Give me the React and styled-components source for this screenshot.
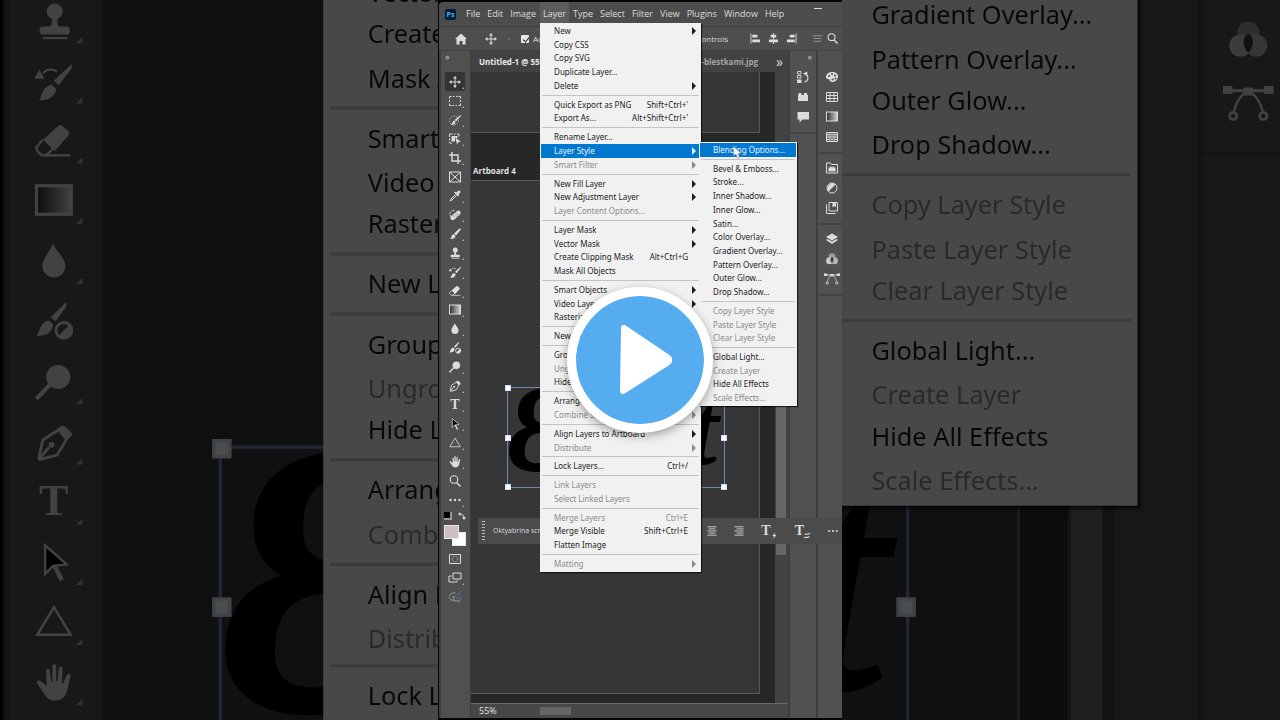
import React, { useId } from 'react';
import styled, { createGlobalStyle, css } from 'styled-components';

const GlobalStyle = createGlobalStyle`
    * {
        box-sizing: border-box;
    }
    body {
        margin: 0;
        background: #000;
        overflow: hidden;
    }
    button,
    select,
    input {
        margin: 0;
        padding: 0;
        border: 0;
        background: none;
        color: inherit;
        font: inherit;
    }
    ul {
        margin: 0;
        padding: 0;
        list-style: none;
    }
`;

/* ---------- data ---------- */

const LAYER_STYLE_MENU = [
    [{ label: 'Blending Options...', active: true, cursor: true }],
    [
        { label: 'Bevel & Emboss...' },
        { label: 'Stroke...' },
        { label: 'Inner Shadow...' },
        { label: 'Inner Glow...' },
        { label: 'Satin...' },
        { label: 'Color Overlay...' },
        { label: 'Gradient Overlay...' },
        { label: 'Pattern Overlay...' },
        { label: 'Outer Glow...' },
        { label: 'Drop Shadow...' }
    ],
    [
        { label: 'Copy Layer Style', disabled: true },
        { label: 'Paste Layer Style', disabled: true },
        { label: 'Clear Layer Style', disabled: true }
    ],
    [
        { label: 'Global Light...' },
        { label: 'Create Layer', disabled: true },
        { label: 'Hide All Effects' },
        { label: 'Scale Effects...', disabled: true }
    ]
];

const LAYER_MENU = [
    [
        { label: 'New', more: true },
        { label: 'Copy CSS' },
        { label: 'Copy SVG' },
        { label: 'Duplicate Layer...' },
        { label: 'Delete', more: true }
    ],
    [
        { label: 'Quick Export as PNG', keys: "Shift+Ctrl+'" },
        { label: 'Export As...', keys: "Alt+Shift+Ctrl+'" }
    ],
    [
        { label: 'Rename Layer...' },
        { label: 'Layer Style', more: true, active: true, submenu: LAYER_STYLE_MENU },
        { label: 'Smart Filter', more: true, disabled: true }
    ],
    [
        { label: 'New Fill Layer', more: true },
        { label: 'New Adjustment Layer', more: true },
        { label: 'Layer Content Options...', disabled: true }
    ],
    [
        { label: 'Layer Mask', more: true },
        { label: 'Vector Mask', more: true },
        { label: 'Create Clipping Mask', keys: 'Alt+Ctrl+G' },
        { label: 'Mask All Objects' }
    ],
    [
        { label: 'Smart Objects', more: true },
        { label: 'Video Layers', more: true },
        { label: 'Rasterize', more: true }
    ],
    [{ label: 'New Layer Based Slice' }],
    [
        { label: 'Group Layers' },
        { label: 'Ungroup Layers', disabled: true },
        { label: 'Hide Layers' }
    ],
    [
        { label: 'Arrange', more: true },
        { label: 'Combine Shapes', more: true, disabled: true }
    ],
    [
        { label: 'Align Layers to Artboard', more: true },
        { label: 'Distribute', more: true, disabled: true }
    ],
    [{ label: 'Lock Layers...', keys: 'Ctrl+/' }],
    [
        { label: 'Link Layers', disabled: true },
        { label: 'Select Linked Layers', disabled: true }
    ],
    [
        { label: 'Merge Layers', keys: 'Ctrl+E', disabled: true },
        { label: 'Merge Visible', keys: 'Shift+Ctrl+E' },
        { label: 'Flatten Image' }
    ],
    [{ label: 'Matting', more: true, disabled: true }]
];

const MENUS = [
    'File',
    'Edit',
    'Image',
    'Layer',
    'Type',
    'Select',
    'Filter',
    'View',
    'Plugins',
    'Window',
    'Help'
];

/* ---------- icons ---------- */

const Svg = styled.svg`
    display: block;
    flex: none;
    overflow: visible;
    fill: none;
    stroke: currentColor;
    stroke-width: 2;
`;

const solid = { fill: 'currentColor', stroke: 'none' };

function GradientIcon() {
    const id = useId();
    return (
        <>
            <defs>
                <linearGradient id={id} x1="0" x2="1" y1="0" y2="0">
                    <stop offset="0" stopColor="#2b2b2b" />
                    <stop offset="1" stopColor="#d8d8d8" />
                </linearGradient>
            </defs>
            <rect x="1" y="2" width="22" height="18" fill={`url(#${id})`} />
        </>
    );
}

const ICONS = {
    move: (
        <>
            <path d="M12 3v18M3 12h18" />
            <path
                {...solid}
                d="M12 0l4 5H8zM12 24l4-5H8zM0 12l5-4v8zM24 12l-5-4v8z"
            />
        </>
    ),
    marquee: (
        <path d="M1 7V3h4M8 3h3M14 3h3M19 3h4v4M23 10v4M23 17v4h-4M16 21h-3M10 21H7M5 21H1v-4M1 14v-4" />
    ),
    quickSelect: (
        <>
            <circle cx="10" cy="13" r="9" strokeDasharray="2 3" />
            <path {...solid} d="M24 1l-1 4-9 10-3-3zM10 13l3 3c0 4-4 6-9 6 3-2 2-7 6-9z" />
        </>
    ),
    objectSelect: (
        <>
            <path d="M1 8V2h6M10 2h3M16 2h4v5M1 11v4M1 18v2h5" strokeWidth="2" />
            <path {...solid} d="M5 6h12v5l-5-2v8H5z" />
            <path {...solid} d="M13 10l11 7-5 1-3 5z" />
        </>
    ),
    crop: <path strokeWidth="3" d="M6 0v18h18M0 6h18v18" />,
    frame: <path d="M1 2h22v20H1zM1 2l22 20M23 2L1 22" />,
    eyedropper: (
        <>
            <path {...solid} d="M15 5l3-3c2-3 7 1 4 4l-3 3 1 2-2 2-8-8 2-2z" />
            <path d="M13 9L4 18l-2 4 4-2 9-9" />
        </>
    ),
    healing: (
        <>
            <path d="M3 15C-1 8 4 2 11 3" strokeDasharray="3 2" />
            <path {...solid} d="M15 5c4-5 11 1 7 6L11 21c-5 4-11-2-7-7z" />
            <path stroke="#4f4f4f" strokeWidth="1.5" d="M10 9l7 7M13 7l7 6M7 12l6 6" strokeDasharray="2 2" />
        </>
    ),
    brush: (
        <path {...solid} d="M23 1c1 1 1 2 0 3l-9 11-4-4L21 1zM9 12l4 4c0 4-5 7-11 6 4-2 2-8 7-10z" />
    ),
    stamp: (
        <>
            <circle {...solid} cx="12.5" cy="6" r="5" />
            <path {...solid} d="M10.5 9h4c-.5 3-.5 5 1 7h-6c1.500-2 1.500-4 1-7z" />
            <rect {...solid} x="3" y="15.500" width="19" height="5" rx="2" />
            <path strokeWidth="1.300" d="M5 22.800h15.500" />
        </>
    ),
    historyBrush: (
        <>
            <path {...solid} d="M-.5 10.500L2.800 4.800 6 10.500z" />
            <path strokeWidth="1.300" d="M5 7c3-3 6-3 9-1" />
            <path {...solid} d="M23 1.500c1 1 0 3-1 4l-7 9-3-3zM10.500 14l3 3c-1 5-5 7-11 7 2-1 1-8 8-10z" />
        </>
    ),
    eraser: (
        <>
            <path {...solid} d="M14.500 2.500c1-1 2-1 3 0l3.500 3c1 1 1 2 0 3l-8.500 9.500-7.500-7z" />
            <path strokeWidth="1.500" d="M5 11l-3.500 4c-1 1-.5 2 0 3l2 2c1 1 3 1 4.500 0l4-4" />
            <path strokeWidth="1.500" d="M6 20.800h16.500" />
        </>
    ),
    gradient: <GradientIcon />,
    drop: <path {...solid} d="M11.300.5C13 5 19.300 10 19.300 14.500a7.300 7.300 0 0 1-14.600 0C4.700 10 10 5 11.300.5z" />,
    mixer: (
        <>
            <path {...solid} d="M19.500-.5c1 1 0 3-.5 4l-6 8-3-2.500zM8.500 11l3 2.500c-1 6-4 7-10.500 7.500 2-2 2-9 7.500-10z" />
            <circle cx="18.300" cy="17.300" r="5" strokeWidth="1.800" />
            <path {...solid} d="M22 13.500A5.300 5.300 0 0 1 14.500 21z" />
        </>
    ),
    dodge: (
        <>
            <circle {...solid} cx="14.700" cy="8.700" r="7.600" />
            <path strokeWidth="2.600" d="M10 13l-9 9.500" />
        </>
    ),
    pen: (
        <>
            <path {...solid} d="M16 2c2-1 3 0 4 1l3 3c1 1 0 2-1 3l-2 2-6-7z" />
            <path strokeWidth="1.800" d="M15 4L5 10.500 2.500 21.500c-.3 1 .2 1.500 1 1.200L14 20l6-10zM3 22l6-7" />
            <circle {...solid} cx="10.500" cy="13.500" r="1.800" />
        </>
    ),
    select: (
        <>
            <path fill="#000" strokeWidth="1.500" d="M6.500 1v18l5-5 8.500-1z" />
            <path strokeWidth="2.800" d="M12.500 14l4.500 9" />
        </>
    ),
    triangle: <path strokeWidth="1.600" d="M12 2l10.500 17.500h-21z" />,
    hand: (
        <path
            {...solid}
            d="M7 4.500c0-2 2.500-2 2.500 0l.7 6.500h.8V1.500C11-.5 13.500-.5 13.500 1.500V11h.8l.7-8c.2-2 2.700-2 2.500 0l-.5 9h.8l2.200-5c.8-1.500 2.800-.8 2.500.6L20.500 16c-.5 4-3.500 7-7.500 7-4 0-6-2-7.500-5L1.500 12.500c-1-2 1-3 2.500-1.500L7.500 14z"
        />
    ),
    zoom: (
        <>
            <circle cx="10" cy="9" r="7.500" strokeWidth="2.300" />
            <path strokeWidth="3" d="M15 15l8 8" />
        </>
    ),
    dots: (
        <>
            <circle {...solid} cx="3" cy="12" r="2.500" />
            <circle {...solid} cx="12" cy="12" r="2.500" />
            <circle {...solid} cx="21" cy="12" r="2.500" />
        </>
    ),
    quickMask: (
        <>
            <path d="M1 3h22v18H1z" />
            <circle cx="12" cy="12" r="5.500" strokeWidth="1.500" strokeDasharray="2 1.500" />
        </>
    ),
    screenMode: (
        <>
            <path d="M8 2h16v12H8z" />
            <path d="M5 8H0v12h16v-3" />
        </>
    ),
    cloud: (
        <>
            <path d="M13 4C6 2 0 7 1 13c1 4 4 6 8 6M12 11h-4l3 9h12" />
            <path stroke="#4e78a0" d="M14 9l8-8M19 10l3-3M14 14l9 0v5" />
        </>
    ),
    home: <path {...solid} d="M12 1l12 11h-3v11h-6v-7H9v7H3V12H0z" />,
    chevron: <path strokeWidth="3" d="M3 8l9 8 9-8" />,
    alignLeft: (
        <>
            <path d="M2 1v22" />
            <path {...solid} d="M5 4h11v6H5zM5 14h17v6H5z" />
        </>
    ),
    alignCenter: (
        <>
            <path d="M12 0v24" />
            <path {...solid} d="M6 4h12v6H6zM2 14h20v6H2z" />
        </>
    ),
    alignRight: (
        <>
            <path d="M22 1v22" />
            <path {...solid} d="M8 4h11v6H8zM2 14h17v6H2z" />
        </>
    ),
    lines: <path d="M1 6h22M4 12h16M4 18h16" />,
    textCenter: <path d="M1 2h22M4 7h16M1 12h22M4 17h16M1 22h22" />,
    textRight: <path d="M1 2h22M6 7h17M1 12h22M6 17h17M1 22h22" />,
    history: (
        <>
            <path d="M1 1h7v5H1zM1 9h7v5H1z" strokeWidth="1.800" />
            <path {...solid} d="M0 17h9v7H0z" />
            <path strokeWidth="2.500" d="M15 22c8-2 9-10 3-16" />
            <path {...solid} d="M12 5l9-4-1 9z" />
        </>
    ),
    plugin: <path {...solid} d="M3 8V4h6v4h5V4h6v4h2v12H2V8z" />,
    comment: <path {...solid} d="M1 2h23v15H11l-6 6v-6H1z" />,
    palette: (
        <>
            <path {...solid} d="M12 2c8 0 13 4 12 10-1 6-6 10-12 10s-4-6-7-6-5-1-5-4c0-5 5-10 12-10z" />
            <g fill="#4c4c4c" stroke="none">
                <circle cx="6" cy="10" r="2" />
                <circle cx="12" cy="6" r="2" />
                <circle cx="18" cy="9" r="2" />
                <circle cx="19" cy="15" r="2" />
                <circle cx="13" cy="17" r="2" />
            </g>
        </>
    ),
    swatches: <path d="M1 3h22v18H1zM1 9h22M1 15h22M8 3v18M16 3v18" />,
    patterns: (
        <>
            <path d="M1 3h22v18H1zM1 12h22M8 3v18M16 3v18" />
            <path strokeWidth="1.500" d="M4 5v5M2 7h5M12 5v5M10 7h4M20 5v5M17 7h5M4 14v5M2 17h5M12 14v5M10 17h4M20 14v5M17 17h5" />
        </>
    ),
    library: (
        <>
            <path d="M1 22V2h8l2 3h12v17z" />
            <path {...solid} d="M5 19v-8h3V9h3v2h2V9h3v2h3v8z" />
        </>
    ),
    adjust: (
        <>
            <circle cx="12" cy="12" r="10" />
            <path {...solid} d="M19 5A10 10 0 0 0 5 19z" />
        </>
    ),
    styles: (
        <>
            <path d="M6 1h17v17H6zM1 5v18h18" />
            <path {...solid} d="M13 2h7v9l-3-3-4 3z" />
        </>
    ),
    layers: (
        <>
            <path {...solid} d="M12 1l12 7-12 7L0 8z" />
            <path {...solid} d="M0 14l3-2 9 5 9-5 3 2-12 8z" />
        </>
    ),
    channels: (
        <g stroke="none">
            <circle cx="12" cy="7.500" r="7" fill="#9a9a9a" />
            <circle cx="7" cy="15.500" r="7" fill="#c8c8c8" />
            <circle cx="17" cy="15.500" r="7" fill="#b4b4b4" />
            <path fill="#3a3a3a" d="M12 8c4 2 4 8 0 12-4-4-4-10 0-12z" />
        </g>
    ),
    paths: (
        <>
            <path d="M1 4h22" />
            <path {...solid} d="M-4 1h6v5h-6zM22 1h6v5h-6zM9 2h6v5H9z" />
            <path strokeWidth="1.500" d="M9 6C6 9 4 12 3 17M15 6c3 3 5 6 6 11" />
            <circle cx="2.500" cy="20" r="2.300" strokeWidth="1.700" />
            <circle cx="21.500" cy="20" r="2.300" strokeWidth="1.700" />
        </>
    ),
    bolt: <path {...solid} d="M15 1L4 14h6l-3 9 12-13h-7z" />,
    wave: <path strokeWidth="4" d="M3 9c4-5 8 3 18-5M1 20c4-5 8 3 18-5" />,
    swap: (
        <>
            <path d="M4 6c9-1 14 4 14 12" strokeWidth="3" />
            <path {...solid} d="M7 0v12L0 6zM12 16h12l-6 8z" />
        </>
    )
};

function Icon({ name, size = 12 }) {
    return (
        <Svg width={size} height={size} viewBox="0 0 24 24" aria-hidden="true">
            {ICONS[name]}
        </Svg>
    );
}

/* ---------- window ---------- */

const Window = styled.div`
    display: flex;
    flex-direction: column;
    width: 100%;
    height: 100%;
    padding: 2px 0 2px 1px;
    background: #050505;
    color: #dcdcdc;
    font: 9px/12px 'Open Sans', 'Noto Sans', sans-serif;
`;

const MenuBar = styled.nav`
    position: relative;
    z-index: 3;
    display: flex;
    align-items: center;
    padding: 0 20px 0 6px;
    background: #4c4c4c;
    border-bottom: 1px solid #3c3c3c;
    border-radius: 4px 0 0 0;
`;

const Logo = styled.span`
    width: 11px;
    margin-right: 7px;
    border-radius: 2px;
    background: #001e36;
    color: #4db1ff;
    font-size: 7px;
    font-weight: 700;
    line-height: 11px;
    text-align: center;
`;

const MenuList = styled.ul`
    display: flex;
    flex: 1;
    gap: 1px;
`;

const MenuName = styled.button`
    padding: 4px 3px;
    line-height: 16px;
    white-space: nowrap;
`;

const MenuTitle = styled.li`
    position: relative;
    background: ${props => (props.$open ? '#5c5c5c' : 'transparent')};
`;

const Minimize = styled.button`
    width: 8px;
    height: 12px;
    border-top: 1px solid #d8d8d8;
`;

const Popup = styled.ul`
    position: absolute;
    display: flex;
    flex-direction: column;
    padding: 1px;
    background: #f1f1f1;
    box-shadow: 1px 1px 1px rgba(0, 0, 0, 0.7);
    color: #1c1c1c;
    font: 8px/12px 'Noto Sans', 'Open Sans', sans-serif;
`;

const LayerPopup = styled(Popup)`
    top: 21px;
    left: 0;
    width: 161px;
    min-height: 549px;
`;

const StylePopup = styled(Popup)`
    top: -2px;
    left: 158px;
    width: 98px;
    min-height: 264px;
`;

const Row = styled.li`
    position: relative;
    display: flex;
    flex: 1 0 13px;
`;

const RowButton = styled.button`
    display: flex;
    flex: 1;
    align-items: center;
    padding: 0 3px 0 13px;
    text-align: left;
    white-space: nowrap;

    ${props =>
        props.$active &&
        css`
            background: #0078d0;
            color: #e8f4ff;
        `}

    &:disabled {
        color: #8a8a8a;
    }
`;

const RowLabel = styled.span`
    flex: 1;
`;

const Keys = styled.span`
    padding-right: 1px;
`;

const Arrow = styled.span`
    width: 8px;

    &::after {
        content: ${props => (props.$show ? "''" : 'none')};
        display: block;
        width: 0;
        margin-left: 3px;
        border: 4px solid transparent;
        border-left-color: currentColor;
        border-right: 0;
    }
`;

const Divider = styled.li`
    height: 1px;
    margin: 2px 1px;
    background: #c4c4c4;
`;

const Pointer = styled.svg`
    position: absolute;
    top: 3px;
    left: 33px;
    z-index: 1;
    overflow: visible;
`;

function MenuRows({ groups }) {
    return groups.map((group, index) => {
        return (
            <React.Fragment key={index}>
                {index > 0 && <Divider role="separator" />}
                {group.map(({ label, keys, more, active, disabled, submenu, cursor }) => {
                    return (
                        <Row key={label}>
                            <RowButton type="button" $active={active} disabled={disabled}>
                                <RowLabel>{label}</RowLabel>
                                {keys && <Keys>{keys}</Keys>}
                                <Arrow $show={more} />
                            </RowButton>
                            {cursor && (
                                <Pointer width="9" height="13" viewBox="0 0 16 24">
                                    <path
                                        d="M1 1v18l4-4 4 8 3-2-3-7h6z"
                                        fill="#fff"
                                        stroke="#777"
                                        strokeWidth="1"
                                    />
                                </Pointer>
                            )}
                            {submenu && (
                                <StylePopup>
                                    <MenuRows groups={submenu} />
                                </StylePopup>
                            )}
                        </Row>
                    );
                })}
            </React.Fragment>
        );
    });
}

/* ---------- options bar ---------- */

const OptionsBar = styled.div`
    display: flex;
    align-items: center;
    height: 24px;
    padding: 0 4px 0 16px;
    background: #4e4e4e;
    border-bottom: 1px solid #404040;
    font-size: 8px;
    white-space: nowrap;
`;

const IconButton = styled.button`
    display: flex;
    align-items: center;
    justify-content: center;
    color: ${props => (props.$dim ? '#9a9a9a' : '#dcdcdc')};
`;

const OptionTools = styled.div`
    display: flex;
    flex: 1;
    align-items: center;
    gap: 10px;

    ${IconButton}:first-child {
        margin-right: 8px;
    }
`;

const AlignTools = styled.div`
    display: flex;
    align-items: center;
    gap: 7px;
    margin-right: 15px;
    margin-left: 22px;
`;

const SearchTools = styled.div`
    display: flex;
    gap: 4px;
`;

const CheckLabel = styled.label`
    display: flex;
    align-items: center;
    gap: 4px;
`;

const Check = styled.input`
    appearance: none;
    width: 8px;
    height: 8px;
    border-radius: 1px;
    background: ${props => (props.defaultChecked ? '#e8e8e8' : '#5a5a5a')};

    &:checked::after {
        content: '';
        display: block;
        width: 3px;
        height: 5px;
        margin: 1px 0 0 3px;
        border: solid #222;
        border-width: 0 1px 1px 0;
        transform: rotate(40deg);
    }
`;

/* ---------- tools ---------- */

const Body = styled.div`
    position: relative;
    display: flex;
    flex: 1;
    min-height: 0;
    background: #3e3e3e;
`;

const Toolbox = styled.div`
    display: flex;
    flex-direction: column;
    width: 29px;
    margin: 0 1px 0 2px;
    background: #505050;
`;

const Collapse = styled.button`
    height: 10px;
    padding: 0 4px;
    color: #c8c8c8;
    font-size: 9px;
    line-height: 7px;
    text-align: ${props => (props.$right ? 'right' : 'left')};
`;

const ToolList = styled.div`
    display: flex;
    flex-direction: column;
    padding: 11px 5px 0 4px;
`;

const ToolButton = styled(IconButton)`
    position: relative;
    height: 19px;
    border-radius: 2px;
    background: ${props => (props.$active ? '#343434' : 'transparent')};

    &::after {
        content: ${props => (props.$plain ? 'none' : "''")};
        position: absolute;
        right: 1px;
        bottom: 2px;
        border-bottom: 2px solid #a8a8a8;
        border-left: 2px solid transparent;
    }
`;

const TypeGlyph = styled.span`
    font: 700 14px/16px 'Liberation Serif', serif;
`;

const ColorKeys = styled.div`
    display: flex;
    align-items: center;
    justify-content: space-between;
    height: 14px;
    padding: 0 4px 0 3px;
`;

const DefaultColors = styled.button`
    width: 8px;
    height: 8px;
    border: 1px solid #999;
    border-width: 0 2px 2px 0;
    background: #000;
`;

const Swatches = styled.div`
    display: grid;
    grid-template-columns: repeat(21, 1fr);
    grid-template-rows: repeat(3, 7px);
    margin: 2px 4px 3px 3px;
`;

const Swatch = styled.button`
    grid-area: ${props => props.$area};
    border: 1px solid #e8e8e8;
    background: ${props => props.$color};
`;

const ModeTools = styled(ToolList)`
    padding-top: 0;
`;

const TOOLS = [
    { name: 'move', active: true },
    { name: 'marquee' },
    { name: 'quickSelect' },
    { name: 'objectSelect' },
    { name: 'crop' },
    { name: 'frame', plain: true },
    { name: 'eyedropper' },
    { name: 'healing' },
    { name: 'brush' },
    { name: 'stamp' },
    { name: 'historyBrush' },
    { name: 'eraser' },
    { name: 'gradient' },
    { name: 'drop' },
    { name: 'mixer', plain: true },
    { name: 'dodge' },
    { name: 'pen' },
    { name: 'type' },
    { name: 'select' },
    { name: 'triangle' },
    { name: 'hand' },
    { name: 'zoom', plain: true },
    { name: 'dots' }
];

function Tools() {
    return (
        <Toolbox>
            <Collapse type="button">»</Collapse>
            <ToolList>
                {TOOLS.map(({ name, active, plain }) => {
                    return (
                        <ToolButton
                            key={name}
                            type="button"
                            aria-label={name}
                            $active={active}
                            $plain={plain}
                        >
                            {name === 'type' ? <TypeGlyph>T</TypeGlyph> : <Icon name={name} />}
                        </ToolButton>
                    );
                })}
            </ToolList>
            <ColorKeys>
                <DefaultColors type="button" aria-label="Default colors" />
                <IconButton type="button" aria-label="Swap colors">
                    <Icon name="swap" size={8} />
                </IconButton>
            </ColorKeys>
            <Swatches>
                <Swatch type="button" aria-label="Background" $area="2 / 9 / 4 / 22" $color="#fff" />
                <Swatch type="button" aria-label="Foreground" $area="1 / 1 / 3 / 15" $color="#cdbfc1" />
            </Swatches>
            <ModeTools>
                <ToolButton type="button" aria-label="Quick mask" $plain>
                    <Icon name="quickMask" />
                </ToolButton>
                <ToolButton type="button" aria-label="Screen mode">
                    <Icon name="screenMode" />
                </ToolButton>
                <ToolButton type="button" aria-label="Cloud" $plain $dim>
                    <Icon name="cloud" />
                </ToolButton>
            </ModeTools>
        </Toolbox>
    );
}

/* ---------- document ---------- */

const Document = styled.main`
    display: flex;
    flex: 1;
    flex-direction: column;
    min-width: 0;
`;

const Tabs = styled.div`
    display: flex;
    align-items: center;
    justify-content: space-between;
    height: 21px;
    padding: 0 5px 0 8px;
    background: #424242;
    font-size: 8px;
    font-weight: 700;
    white-space: nowrap;
`;

const Tab = styled.button`
    color: ${props => (props.$active ? '#e8e8e8' : '#a4a4a4')};
`;

const OtherTabs = styled.div`
    display: flex;
    align-items: center;
    gap: 18px;
`;

const MoreTabs = styled.button`
    font-size: 14px;
    font-weight: 400;
`;

const View = styled.div`
    display: flex;
    flex: 1;
    min-height: 0;
`;

const Pasteboard = styled.div`
    position: relative;
    display: flex;
    flex: 1;
    flex-direction: column;
    padding: 0 15px 9px 0;
    background: #272727;
`;

const Artboard = styled.div`
    flex: ${props => (props.$tail ? '0 0 61px' : '1')};
    background: #353635;
    border: solid #585858;
    border-width: ${props => (props.$tail ? '0 1px 1px 0' : '1px 1px 1px 0')};
`;

const ArtboardName = styled.h2`
    margin: 31px 0 3px;
    padding-left: 2px;
    color: #e0e0e0;
    font-size: 8px;
    font-weight: 700;
    line-height: 13px;
`;

const Selection = styled.div`
    position: absolute;
    top: 315px;
    left: 36px;
    display: flex;
    align-items: flex-start;
    justify-content: space-between;
    width: 218px;
    height: 101px;
    padding-right: 6px;
    border: 1px solid #6d86b0;
`;

const Lettering = styled.span`
    color: #000;
    font: italic 400 ${props => props.$size}px/84px 'Liberation Serif', serif;
    -webkit-text-stroke: ${props => props.$weight}px #000;
`;

const Handle = styled.i`
    position: absolute;
    top: calc(${props => props.$y}% - 3px);
    left: calc(${props => props.$x}% - 3px);
    width: 6px;
    height: 6px;
    border: 1px solid #cfe0f4;
    background: #fff;
`;

const HANDLES = [
    [0, 0],
    [50, 0],
    [100, 0],
    [0, 50],
    [100, 50],
    [0, 100],
    [50, 100],
    [100, 100]
];

const VerticalScroll = styled.div`
    width: 13px;
    padding: 326px 2px 148px 1px;
    background: #434343;

    &::before {
        content: '';
        display: block;
        height: 100%;
        background: #666;
    }
`;

const Status = styled.div`
    display: flex;
    align-items: center;
    gap: 43px;
    height: 15px;
    padding-left: 8px;
    background: #474747;
    border-top: 1px solid #6a6a6a;
    color: #e0e0e0;

    &::after {
        content: '';
        width: 31px;
        height: 8px;
        background: #666;
    }
`;

/* ---------- dock ---------- */

const Dock = styled.div`
    display: flex;
    flex-direction: column;
    width: ${props => props.$width}px;
    margin-left: 2px;
    background: #515151;
`;

const DockGroup = styled.div`
    display: flex;
    flex-direction: column;
    padding: ${props => (props.$inset ? '4px 0 5px 4px' : '4px 0 5px')};
    border-bottom: 2px solid #434343;
`;

const DockButton = styled(IconButton)`
    height: 20px;
`;

const DockHead = styled.div`
    display: flex;
    flex-direction: column;
    height: 12px;
`;

function DockIcons({ names, inset }) {
    return (
        <DockGroup $inset={inset}>
            {names.map(name => {
                return (
                    <DockButton key={name} type="button" aria-label={name}>
                        <Icon name={name} />
                    </DockButton>
                );
            })}
        </DockGroup>
    );
}

/* ---------- floating type bar ---------- */

const TypeBar = styled.div`
    position: absolute;
    top: 467px;
    right: 0;
    left: 39px;
    display: flex;
    align-items: center;
    height: 26px;
    padding: 0 4px;
    background: #4b4b4b;
`;

const Grip = styled.span`
    width: 3px;
    height: 20px;
    margin-right: 8px;
    background: repeating-linear-gradient(#c0c0c0 0 1px, transparent 1px 3px);
`;

const FontSelect = styled.select`
    appearance: none;
    width: 90px;
    font-size: 7px;
`;

const TypeTools = styled.div`
    display: flex;
    align-items: center;
    gap: 17px;
    margin-left: auto;
`;

const TypeAction = styled(IconButton)`
    align-items: flex-end;
`;

function Scene() {
    return (
        <Window>
            <MenuBar>
                <Logo>Ps</Logo>
                <MenuList>
                    {MENUS.map(name => {
                        const open = name === 'Layer';
                        return (
                            <MenuTitle key={name} $open={open}>
                                <MenuName type="button">{name}</MenuName>
                                {open && (
                                    <LayerPopup>
                                        <MenuRows groups={LAYER_MENU} />
                                    </LayerPopup>
                                )}
                            </MenuTitle>
                        );
                    })}
                </MenuList>
                <Minimize type="button" aria-label="Minimize" />
            </MenuBar>
            <OptionsBar>
                <OptionTools>
                    <IconButton type="button" aria-label="Home">
                        <Icon name="home" />
                    </IconButton>
                    <IconButton type="button" aria-label="Move tool">
                        <Icon name="move" />
                    </IconButton>
                    <IconButton type="button" aria-label="Tool presets" $dim>
                        <Icon name="chevron" size={4} />
                    </IconButton>
                    <CheckLabel>
                        <Check type="checkbox" defaultChecked />
                        Auto-Select:
                    </CheckLabel>
                </OptionTools>
                <CheckLabel>
                    <Check type="checkbox" />
                    Show Transform Controls
                </CheckLabel>
                <AlignTools>
                    <IconButton type="button" aria-label="Align left">
                        <Icon name="alignLeft" size={11} />
                    </IconButton>
                    <IconButton type="button" aria-label="Align center">
                        <Icon name="alignCenter" size={11} />
                    </IconButton>
                    <IconButton type="button" aria-label="Align right">
                        <Icon name="alignRight" size={11} />
                    </IconButton>
                </AlignTools>
                <SearchTools>
                    <IconButton type="button" aria-label="More options" $dim>
                        <Icon name="lines" size={11} />
                    </IconButton>
                    <IconButton type="button" aria-label="Search">
                        <Icon name="zoom" size={11} />
                    </IconButton>
                </SearchTools>
            </OptionsBar>
            <Body>
                <Tools />
                <Document>
                    <Tabs>
                        <Tab type="button" $active>
                            Untitled-1 @ 55%
                        </Tab>
                        <OtherTabs>
                            <Tab type="button">s-blestkami.jpg</Tab>
                            <MoreTabs type="button">»</MoreTabs>
                        </OtherTabs>
                    </Tabs>
                    <View>
                        <Pasteboard>
                            <Artboard $tail />
                            <ArtboardName>Artboard 4</ArtboardName>
                            <Artboard />
                            <Selection>
                                <Lettering $size={118} $weight={4}>
                                    Ɛ
                                </Lettering>
                                <Lettering $size={100} $weight={2}>
                                    t
                                </Lettering>
                                {HANDLES.map(([x, y]) => {
                                    return <Handle key={`${x}-${y}`} $x={x} $y={y} />;
                                })}
                            </Selection>
                        </Pasteboard>
                        <VerticalScroll />
                    </View>
                    <Status>55%</Status>
                </Document>
                <Dock $width={26}>
                    <DockHead>
                        <Collapse type="button" $right>
                            «
                        </Collapse>
                    </DockHead>
                    <DockIcons names={['history', 'plugin', 'comment']} />
                </Dock>
                <Dock $width={24}>
                    <DockHead />
                    <DockIcons names={['palette', 'swatches', 'gradient', 'patterns']} inset />
                    <DockIcons names={['library', 'adjust', 'styles']} inset />
                    <DockIcons names={['layers', 'channels', 'paths']} inset />
                </Dock>
                <TypeBar>
                    <Grip />
                    <FontSelect aria-label="Font">
                        <option>Oktyabrina script</option>
                    </FontSelect>
                    <TypeTools>
                        <IconButton type="button" aria-label="Center text">
                            <Icon name="textCenter" size={10} />
                        </IconButton>
                        <IconButton type="button" aria-label="Right align text">
                            <Icon name="textRight" size={10} />
                        </IconButton>
                        <TypeAction type="button" aria-label="Quick type">
                            <TypeGlyph>T</TypeGlyph>
                            <Icon name="bolt" size={7} />
                        </TypeAction>
                        <TypeAction type="button" aria-label="Warp text">
                            <TypeGlyph>T</TypeGlyph>
                            <Icon name="wave" size={7} />
                        </TypeAction>
                        <IconButton type="button" aria-label="More">
                            <Icon name="dots" size={10} />
                        </IconButton>
                    </TypeTools>
                </TypeBar>
            </Body>
        </Window>
    );
}

/* ---------- player ---------- */

const Player = styled.div`
    position: relative;
    display: flex;
    justify-content: center;
    height: 100vh;
    overflow: hidden;
    background: #000;
`;

// only the middle band of the enlarged window reaches the viewport
const Backdrop = styled.div`
    position: absolute;
    inset: 0;
    display: flex;
    justify-content: center;
    transform: scale(3.168);
    filter: brightness(0.3);

    ${Logo}, ${MenuName}, ${OptionsBar}, ${Tabs}, ${Status}, ${TypeBar}, ${Keys} {
        visibility: hidden;
    }
`;

const Frame = styled.div`
    position: relative;
    flex: 0 1 404px;
    height: 100%;
`;

const PlayButton = styled.button`
    position: absolute;
    top: 50%;
    left: 50%;
    z-index: 5;
    width: 146px;
    height: 146px;
    border: 9px solid #fff;
    border-radius: 50%;
    background: #55acee;
    background-clip: padding-box;
    box-shadow: 0 3px 10px rgba(0, 0, 0, 0.35);
    transform: translate(-50%, -50%);

    svg {
        display: block;
        width: 100%;
    }
`;

export default function App() {
    return (
        <Player>
            <GlobalStyle />
            <Backdrop inert aria-hidden="true">
                <Frame>
                    <Scene />
                </Frame>
            </Backdrop>
            <Frame>
                <Scene />
            </Frame>
            <PlayButton type="button" aria-label="Play">
                <svg viewBox="0 0 128 128">
                    <path
                        d="M48 32L91 61c3 2 3 4 0 6L47 95z"
                        fill="#fff"
                        stroke="#fff"
                        strokeWidth="6"
                        strokeLinejoin="round"
                    />
                </svg>
            </PlayButton>
        </Player>
    );
}
